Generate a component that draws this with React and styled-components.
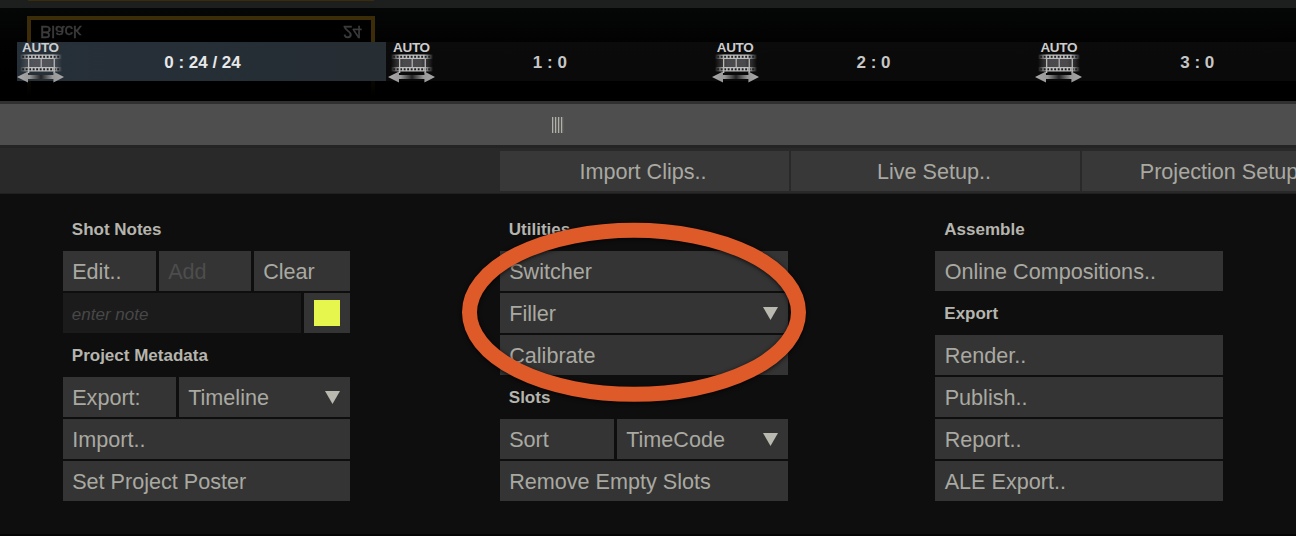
import React from "react";
import styled, { createGlobalStyle } from "styled-components";

const Global = createGlobalStyle`
  * { box-sizing: border-box; }
  html, body { margin: 0; padding: 0; background: #0e0e0e; overflow: hidden; }
  body { font-family: "Liberation Sans", Arial, sans-serif; }
`;

const Screen = styled.div`
  position: relative;
  display: flex;
  flex-direction: column;
  width: 1296px;
  height: 536px;
  overflow: hidden;
  background: #0e0e0e;
  color: #a9a9a2;
`;

/* ---------- timeline ---------- */

const Timeline = styled.header`
  position: relative;
  flex: none;
  height: 101px;
  padding-top: 42px;
  overflow: hidden;
  background: linear-gradient(#1d1e1e 0 8px, #050606 8px, #020202 42px, #000 80px);
`;

const ClipEdge = styled.div`
  position: absolute;
  left: 28px;
  top: 0;
  width: 346px;
  height: 1px;
  background: #3a2c08;
`;

const ClipReflection = styled.div`
  position: absolute;
  left: 27px;
  top: 16px;
  width: 348px;
  height: 80px;
  padding: 2px 9px;
  display: flex;
  justify-content: space-between;
  border: 4px solid #3c2d08;
  border-bottom: 0;
  background: #000;
  color: #3c3c3c;
  font-size: 17px;
  -webkit-text-stroke: 0.4px #3c3c3c;
  line-height: 18px;
  mask-image: linear-gradient(#000 30%, rgba(0, 0, 0, 0.35) 60%, transparent);
`;

const Mirrored = styled.span`
  height: 18px;
  transform: scaleY(-1);
`;

const Slots = styled.div`
  position: relative;
  display: flex;
  height: 39px;
  margin-left: 17px;
  background: rgba(24, 24, 24, 0.42);
`;

const Slot = styled.div`
  position: relative;
  flex: none;
  width: ${(p) => (p.$active ? 371 : 323.7)}px;
  height: 39px;
  color: ${(p) => (p.$active ? "#e6e8e9" : "#c6c6c6")};
  font-size: 17px;
  font-weight: 700;
  line-height: 42px;
  text-align: center;
  background: ${(p) =>
    p.$active
      ? "linear-gradient(90deg, #263039, #262d33) 0 0 / 369px 100% no-repeat"
      : "none"};
`;

const SlotIcon = styled.svg`
  position: absolute;
  left: 0;
  top: 0;
  width: 48px;
  height: 42px;
  overflow: visible;
`;

const AutoTag = styled.span`
  position: absolute;
  left: 5px;
  top: -2px;
  color: #cdcdcd;
  font-size: 13.5px;
  letter-spacing: -0.3px;
  line-height: 15px;
`;

function FilmIcon({ id }) {
  const holes = Array.from({ length: 11 }, (_, i) => 5.2 + i * 3.5);
  return (
    <SlotIcon viewBox="0 0 48 42">
      <defs>
        <linearGradient id={`film${id}`}>
          <stop offset="0" stopColor="#aaa" stopOpacity="0" />
          <stop offset=".22" stopColor="#bdbdbd" />
          <stop offset=".78" stopColor="#bdbdbd" />
          <stop offset="1" stopColor="#aaa" stopOpacity="0" />
        </linearGradient>
        <linearGradient id={`frame${id}`}>
          <stop offset="0" stopColor="#777" stopOpacity="0" />
          <stop offset=".3" stopColor="#606064" />
          <stop offset=".7" stopColor="#606064" />
          <stop offset="1" stopColor="#777" stopOpacity="0" />
        </linearGradient>
        <linearGradient id={`arrow${id}`} gradientUnits="userSpaceOnUse" x1="1" y1="0" x2="47" y2="0">
          <stop offset="0" stopColor="#a8a8a8" />
          <stop offset=".25" stopColor="#989898" />
          <stop offset=".5" stopColor="#242426" />
          <stop offset=".75" stopColor="#989898" />
          <stop offset="1" stopColor="#a8a8a8" />
        </linearGradient>
      </defs>
      <rect x="3" y="13" width="42" height="16" fill={`url(#frame${id})`} opacity=".75" />
      <rect x="3" y="12.5" width="42" height="4.5" fill={`url(#film${id})`} />
      <rect x="3" y="25" width="42" height="4.5" fill={`url(#film${id})`} />
      {holes.map((x) => (
        <g key={x} fill="#1d1f21">
          <rect x={x} y="13.8" width="1.9" height="2" />
          <rect x={x} y="26.3" width="1.9" height="2" />
        </g>
      ))}
      <g fill="#b8b8b8">
        <rect x="11" y="17" width="1.3" height="14" />
        <rect x="23.6" y="17" width="1.2" height="8.5" />
        <rect x="36.6" y="17" width="1.3" height="14" />
      </g>
      <path
        d="M0 35 11 29.6V33H36.4V29.6L47 35 36.4 40.4V37H11V40.4Z"
        fill={`url(#arrow${id})`}
      />
    </SlotIcon>
  );
}

/* ---------- scroll bar and tab bar ---------- */

const ScrollBar = styled.div`
  flex: none;
  display: flex;
  align-items: center;
  height: 47px;
  padding-left: 552px;
  border-top: 3px solid #303030;
  border-bottom: 3px solid #242424;
  background: #4e4e4e;
`;

const Grip = styled.div`
  width: 12px;
  height: 16px;
  background: repeating-linear-gradient(90deg, #b0b0a8 0 1px, #6a6a66 1px 2px, #555 2px 3px);
`;

const TabBar = styled.nav`
  flex: none;
  display: flex;
  gap: 2px;
  height: 46px;
  padding: 3px 0 3px 500px;
  border-bottom: 1px solid #202020;
  background: #292929;
`;

const Tab = styled.div`
  flex: none;
  width: 289px;
  height: 40px;
  padding: 1px 3px 0 0;
  background: #383838;
  font-size: 21.6px;
  line-height: 40px;
  text-align: center;
`;

/* ---------- panels ---------- */

const Panels = styled.main`
  flex: 1;
  display: grid;
  grid-template-columns: 287.5px 288px 287.5px;
  column-gap: 148.5px;
  align-items: start;
  padding: 15px 0 0 62.8px;
  border-bottom: 2px solid #050505;
`;

const Panel = styled.section`
  display: flex;
  flex-direction: column;
  gap: 2px;
  margin-left: ${(p) => p.$shift || 0}px;
  margin-right: ${(p) => -(p.$shift || 0)}px;
`;

const Heading = styled.h2`
  margin: 0;
  padding: 1px 0 0 9px;
  height: 40px;
  color: #b5b5ae;
  font-size: 17px;
  font-weight: 700;
  line-height: 40px;
`;

const Row = styled.div`
  display: flex;
  gap: 3px;
  height: 40px;
`;

const Button = styled.div`
  display: flex;
  align-items: center;
  justify-content: space-between;
  flex: ${(p) => (p.$w ? `0 0 ${p.$w}px` : "1 1 0")};
  height: 40px;
  padding: 1px 10px 0 9.4px;
  background: #343434;
  color: ${(p) => (p.$disabled ? "#4d4d4d" : "inherit")};
  font-size: 21.6px;
  line-height: 40px;
  white-space: nowrap;
`;

const NoteField = styled.div`
  flex: 1;
  padding-left: 9px;
  background: #1b1b1b;
  color: #484848;
  font-size: 17px;
  font-style: italic;
  line-height: 43px;
`;

const ColorWell = styled.div`
  flex: 0 0 46px;
  padding: 7px 10px;
  background: #343434;
`;

const Swatch = styled.div`
  width: 26px;
  height: 26px;
  background: #e6f64d;
`;

const Caret = () => (
  <svg width="15" height="13" viewBox="0 0 15 13">
    <path d="M0 0H15L7.5 13Z" fill="#b9b9b0" />
  </svg>
);

const Highlight = styled.svg`
  position: absolute;
  left: 452px;
  top: 212px;
  width: 364px;
  height: 204px;
  filter: drop-shadow(0 1px 2px rgba(0, 0, 0, 0.75));
`;

export default function App() {
  const slots = ["0 : 24 / 24", "1 : 0", "2 : 0", "3 : 0"];
  return (
    <>
      <Global />
      <Screen>
        <Timeline>
          <ClipEdge />
          <ClipReflection>
            <Mirrored>Black</Mirrored>
            <Mirrored>24</Mirrored>
          </ClipReflection>
          <Slots>
            {slots.map((label, i) => (
              <Slot key={label} $active={i === 0}>
                <FilmIcon id={i} />
                <AutoTag>AUTO</AutoTag>
                {label}
              </Slot>
            ))}
          </Slots>
        </Timeline>
        <ScrollBar>
          <Grip />
        </ScrollBar>
        <TabBar>
          <Tab>Import Clips..</Tab>
          <Tab>Live Setup..</Tab>
          <Tab>Projection Setup..</Tab>
        </TabBar>
        <Panels>
          <Panel>
            <Heading>Shot Notes</Heading>
            <Row>
              <Button $w={93}>Edit..</Button>
              <Button $w={92} $disabled>Add</Button>
              <Button>Clear</Button>
            </Row>
            <Row>
              <NoteField>enter note</NoteField>
              <ColorWell>
                <Swatch />
              </ColorWell>
            </Row>
            <Heading>Project Metadata</Heading>
            <Row>
              <Button $w={113}>Export:</Button>
              <Button>
                Timeline
                <Caret />
              </Button>
            </Row>
            <Row>
              <Button>Import..</Button>
            </Row>
            <Row>
              <Button>Set Project Poster</Button>
            </Row>
          </Panel>
          <Panel $shift={1}>
            <Heading>Utilities</Heading>
            <Row>
              <Button>Switcher</Button>
            </Row>
            <Row>
              <Button>
                Filler
                <Caret />
              </Button>
            </Row>
            <Row>
              <Button>Calibrate</Button>
            </Row>
            <Heading>Slots</Heading>
            <Row>
              <Button $w={114}>Sort</Button>
              <Button>
                TimeCode
                <Caret />
              </Button>
            </Row>
            <Row>
              <Button>Remove Empty Slots</Button>
            </Row>
          </Panel>
          <Panel>
            <Heading>Assemble</Heading>
            <Row>
              <Button>Online Compositions..</Button>
            </Row>
            <Heading>Export</Heading>
            <Row>
              <Button>Render..</Button>
            </Row>
            <Row>
              <Button>Publish..</Button>
            </Row>
            <Row>
              <Button>Report..</Button>
            </Row>
            <Row>
              <Button>ALE Export..</Button>
            </Row>
          </Panel>
        </Panels>
        <Highlight viewBox="0 0 364 204">
          <ellipse cx="182" cy="100.3" rx="164.5" ry="82" fill="none" stroke="#df5a29" strokeWidth="15" />
        </Highlight>
      </Screen>
    </>
  );
}
